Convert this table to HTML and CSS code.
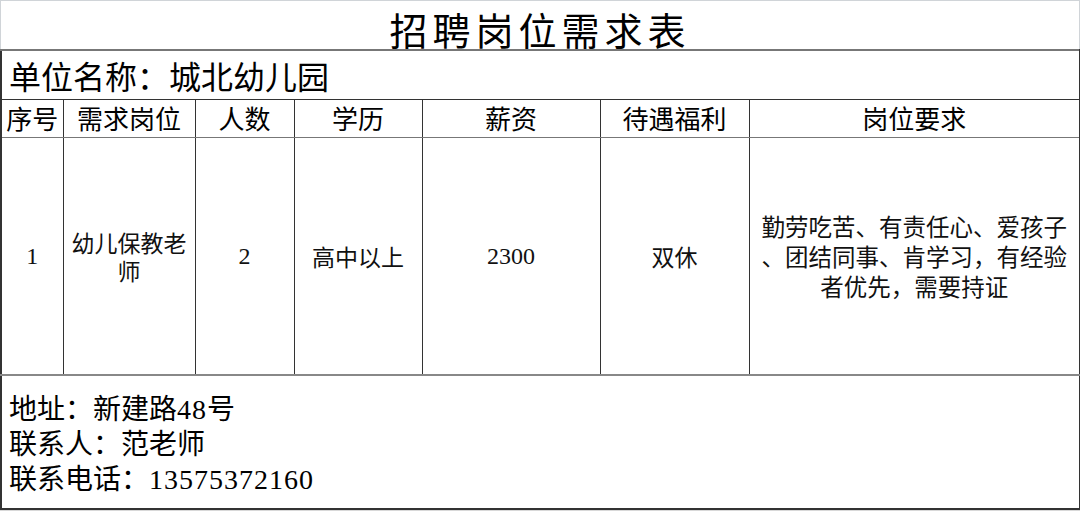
FILE: index.html
```html
<!DOCTYPE html>
<html lang="zh">
<head>
<meta charset="utf-8">
<title>招聘岗位需求表</title>
<link rel="stylesheet" href="styles.css">
</head>
<body>
<div class="page">
  <div class="title">招聘岗位需求表</div>
  <table class="sheet">
    <colgroup>
      <col class="c1"><col class="c2"><col class="c3"><col class="c4"><col class="c5"><col class="c6"><col class="c7">
    </colgroup>
    <tr class="unit-row">
      <td colspan="7" class="unit">单位名称：城北幼儿园</td>
    </tr>
    <tr class="head-row">
      <th>序号</th><th>需求岗位</th><th>人数</th><th>学历</th><th>薪资</th><th>待遇福利</th><th>岗位要求</th>
    </tr>
    <tr class="data-row">
      <td class="num">1</td>
      <td>幼儿保教老师</td>
      <td class="num">2</td>
      <td>高中以上</td>
      <td class="num">2300</td>
      <td>双休</td>
      <td class="req">勤劳吃苦、有责任心、爱孩子、团结同事、肯学习，有经验者优先，需要持证</td>
    </tr>
    <tr class="foot-row">
      <td colspan="7" class="foot">
        <div>地址：新建路<span class="digits">48</span>号</div>
        <div>联系人：范老师</div>
        <div>联系电话：<span class="digits">13575372160</span></div>
      </td>
    </tr>
  </table>
</div>
</body>
</html>
```
FILE: styles.css
```css
html, body {
  margin: 0;
  padding: 0;
  background: #ffffff;
}
body {
  font-family: "Liberation Serif", "Noto Sans CJK SC", serif;
  color: #111;
}
.page {
  width: 1080px;
  height: 511px;
  background: #fff;
  border-bottom: 1px solid #d8d8d8;
  box-sizing: border-box;
}
.title {
  box-sizing: border-box;
  width: 1080px;
  height: 49px;
  border-top: 1px solid #d0d4d8;
  border-left: 1px solid #d0d4d8;
  border-right: 1px solid #d0d4d8;
  text-align: center;
  font-family: "Noto Sans CJK SC", sans-serif;
  font-size: 38px;
  font-weight: 400;
  line-height: 55px;
  letter-spacing: 5px;
  color: #000;
}
.sheet {
  width: 1079px;
  border-collapse: collapse;
  table-layout: fixed;
  border-left: 2px solid #333;
  border-right: 2px solid #333;
  border-bottom: 2px solid #333;
  border-top: 2px solid #777;
}
.c1 { width: 62px; }
.c2 { width: 132px; }
.c3 { width: 99px; }
.c4 { width: 128px; }
.c5 { width: 178px; }
.c6 { width: 149px; }
.c7 { width: 331px; }
.sheet td, .sheet th {
  border: 1px solid #333;
  padding: 0;
  text-align: center;
  vertical-align: middle;
  font-family: "Noto Sans CJK SC", sans-serif;
  font-weight: 400;
  color: #111;
}
.unit-row { height: 49px; }
.sheet td.unit {
  text-align: left;
  padding-left: 7px;
  font-size: 32px;
  line-height: 40px;
  color: #000;
}
.head-row { height: 38px; }
.head-row th {
  font-size: 26px;
  line-height: 34px;
  color: #000;
  border-bottom-color: #777;
}
.data-row { height: 238px; }
.data-row td {
  font-size: 23px;
  line-height: 28px;
  padding: 0 4px;
  border-bottom: 2px solid #888;
}
.sheet td.num {
  font-family: "Liberation Serif", serif;
  font-size: 24px;
}
.sheet td.req {
  padding: 0 8px;
  font-size: 23.5px;
  line-height: 30px;
  line-break: anywhere;
}
.foot-row { height: 134px; }
.sheet td.foot {
  text-align: left;
  vertical-align: top;
  padding: 16px 0 0 7px;
  font-family: "Liberation Serif", "Noto Sans CJK SC", serif;
  font-size: 28px;
  line-height: 35px;
  color: #000;
}
.digits {
  letter-spacing: 1px;
}
```
